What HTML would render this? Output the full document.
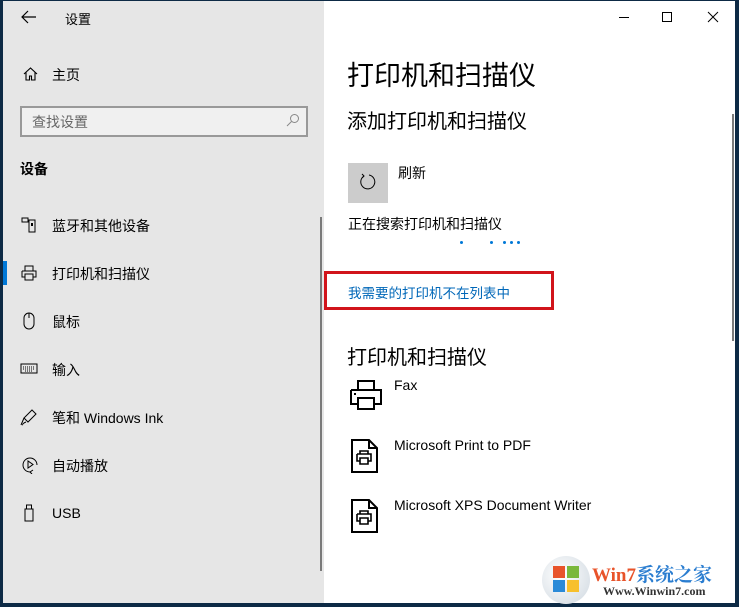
<!DOCTYPE html>
<html><head><meta charset="utf-8"><style>
*{margin:0;padding:0;box-sizing:border-box}
body{width:739px;height:607px;background:#0d2a45;position:relative;overflow:hidden;font-family:"Liberation Sans","Noto Sans CJK SC",sans-serif;color:#000}
.win{position:absolute;left:3px;top:1px;width:732px;height:602px;background:#fff}
.side{position:absolute;left:0;top:0;width:321px;height:602px;background:#e6e6e6}
.a{position:absolute;font-size:14px;white-space:nowrap}
svg{position:absolute}
</style></head><body>
<div class="win">
<div class="side">
<svg style="left:18px;top:9px" width="16" height="14" viewBox="0 0 16 14"><path d="M7 1L1 7l6 6M1 7h14" stroke="#000" stroke-width="1.2" fill="none"/></svg>
<div class="a" style="left:62px;top:8px;font-size:13px">设置</div>
<svg style="left:20px;top:66px" width="15" height="14" viewBox="0 0 15 14"><path d="M1 7L7.5 1 14 7M3 5.5V13h3.5V9h2v4H12V5.5" stroke="#000" stroke-width="1.1" fill="none"/></svg>
<div class="a" style="left:49px;top:64px">主页</div>
<div style="position:absolute;left:17px;top:105px;width:288px;height:31px;border:2px solid #999;background:#f0f0f0"></div>
<div class="a" style="left:29px;top:111px;color:#666">查找设置</div>
<svg style="left:283px;top:112px" width="14" height="14" viewBox="0 0 14 14"><circle cx="8.5" cy="5.5" r="4" stroke="#888" fill="none"/><path d="M5.5 8.5L1 13" stroke="#888"/></svg>
<div class="a" style="left:17px;top:158px;font-weight:bold">设备</div>
<svg style="left:18px;top:216px" width="16" height="16" viewBox="0 0 16 16"><rect x="1" y="1" width="6" height="4" fill="none" stroke="#000"/><rect x="8" y="3" width="6" height="12" fill="none" stroke="#000"/><rect x="10" y="6" width="2" height="3" fill="#000"/></svg>
<div class="a" style="left:49px;top:215px">蓝牙和其他设备</div>
<div style="position:absolute;left:0;top:260px;width:4px;height:24px;background:#0078d7"></div>
<svg style="left:18px;top:264px" width="16" height="16" viewBox="0 0 16 16"><path d="M4 6V1h8v5M1 6h14v6h-3M4 12H1V6M4 9h8v6H4z" fill="none" stroke="#000"/></svg>
<div class="a" style="left:49px;top:263px">打印机和扫描仪</div>
<svg style="left:20px;top:311px" width="12" height="18" viewBox="0 0 12 18"><rect x="1" y="1" width="10" height="16" rx="5" fill="none" stroke="#000"/><path d="M6 1v5" stroke="#000"/></svg>
<div class="a" style="left:49px;top:311px">鼠标</div>
<svg style="left:17px;top:362px" width="18" height="11" viewBox="0 0 18 11"><rect x="1" y="1" width="16" height="9" fill="none" stroke="#000"/><path d="M3 4h12M3 6h12M5 8h8" stroke="#000" stroke-dasharray="1 1"/></svg>
<div class="a" style="left:49px;top:359px">输入</div>
<svg style="left:17px;top:407px" width="18" height="18" viewBox="0 0 18 18"><path d="M12 2l4 4-8 8-4-4zM4 10l-3 7M6 14c-3 1-4 3-3 3" fill="none" stroke="#000"/></svg>
<div class="a" style="left:49px;top:407px">笔和 Windows Ink</div>
<svg style="left:18px;top:455px" width="18" height="18" viewBox="0 0 18 18"><path d="M9 16A7 7 0 1 1 16 9" fill="none" stroke="#000"/><path d="M7 5v7l5-3.5z" fill="none" stroke="#000"/><path d="M9 16l3-2M9 16l2 2" stroke="#000"/></svg>
<div class="a" style="left:49px;top:455px">自动播放</div>
<svg style="left:21px;top:503px" width="10" height="18" viewBox="0 0 10 18"><rect x="1" y="5" width="8" height="12" fill="none" stroke="#000"/><rect x="2.5" y="1" width="5" height="4" fill="none" stroke="#000"/></svg>
<div class="a" style="left:49px;top:504px">USB</div>
<div style="position:absolute;left:317px;top:216px;width:2px;height:354px;background:#7a7a7a"></div>
</div>
<svg style="left:616px;top:10px" width="110" height="14" viewBox="0 0 110 14"><path d="M0 6.5h10" stroke="#000"/><rect x="43.5" y="1.5" width="9" height="9" fill="none" stroke="#000"/><path d="M89 1l10 10M99 1L89 11" stroke="#000"/></svg>
<div class="a" style="left:344px;top:53px;font-size:27px">打印机和扫描仪</div>
<div class="a" style="left:344px;top:104px;font-size:20px">添加打印机和扫描仪</div>
<div style="position:absolute;left:345px;top:162px;width:40px;height:40px;background:#ccc"></div>
<svg style="left:356px;top:172px" width="18" height="18" viewBox="0 0 18 18"><path d="M5 3A7 7 0 1 0 10 2" fill="none" stroke="#000"/><path d="M3 1l2 2-2 2" fill="none" stroke="#000"/></svg>
<div class="a" style="left:395px;top:162px">刷新</div>
<div class="a" style="left:345px;top:213px">正在搜索打印机和扫描仪</div>
<div style="position:absolute;left:457px;top:240px;width:3px;height:3px;background:#0078d7;border-radius:50%;box-shadow:30px 0 #0078d7,43px 0 #0078d7,50px 0 #0078d7,57px 0 #0078d7"></div>
<div style="position:absolute;left:321px;top:270px;width:230px;height:39px;border:3px solid #d1141b"></div>
<div class="a" style="left:345px;top:281px;color:#0067b8;font-size:13.5px">我需要的打印机不在列表中</div>
<div class="a" style="left:344px;top:340px;font-size:20px">打印机和扫描仪</div>
<svg style="left:346px;top:378px" width="34" height="32" viewBox="0 0 34 32"><path d="M9 11V2h16v9M2 11h30v14h-7M9 25H2V11M9 19h16v11H9z" fill="none" stroke="#000" stroke-width="2"/><rect x="5" y="14" width="2" height="2"/></svg>
<div class="a" style="left:391px;top:376px">Fax</div>
<svg style="left:348px;top:438px" width="28" height="34" viewBox="0 0 28 34"><path d="M1 1h17l8 8v24H1zM18 1v8h8" fill="none" stroke="#000" stroke-width="2"/><path d="M9 15v-3h8v3M6 15h14v7h-3M9 22H6v-7M9 19h8v6H9z" fill="none" stroke="#000" stroke-width="1.6"/></svg>
<div class="a" style="left:391px;top:436px">Microsoft Print to PDF</div>
<svg style="left:348px;top:498px" width="28" height="34" viewBox="0 0 28 34"><path d="M1 1h17l8 8v24H1zM18 1v8h8" fill="none" stroke="#000" stroke-width="2"/><path d="M9 15v-3h8v3M6 15h14v7h-3M9 22H6v-7M9 19h8v6H9z" fill="none" stroke="#000" stroke-width="1.6"/></svg>
<div class="a" style="left:391px;top:496px">Microsoft XPS Document Writer</div>
<div style="position:absolute;left:729px;top:113px;width:2px;height:227px;background:#7a7a7a"></div>
</div>
<div style="position:absolute;left:542px;top:556px;width:48px;height:48px;border-radius:50%;background:radial-gradient(circle at 40% 40%,#fff,#cfd8e0)"></div>
<div style="position:absolute;left:553px;top:566px;width:12px;height:12px;background:#e8532a"></div>
<div style="position:absolute;left:567px;top:566px;width:12px;height:12px;background:#7ab83c"></div>
<div style="position:absolute;left:553px;top:580px;width:12px;height:12px;background:#2a8ad8"></div>
<div style="position:absolute;left:567px;top:580px;width:12px;height:12px;background:#f7c02c"></div>
<div class="a" style="left:592px;top:560px;font-size:19px;font-weight:bold;color:#e8532a;font-family:'Liberation Serif','Noto Serif CJK SC',serif">Win7<span style="color:#2a7dd0">系统之家</span></div>
<div class="a" style="left:603px;top:584px;font-size:12px;font-weight:bold;color:#333;font-family:'Liberation Serif',serif">Www.Winwin7.com</div>
</body></html>
